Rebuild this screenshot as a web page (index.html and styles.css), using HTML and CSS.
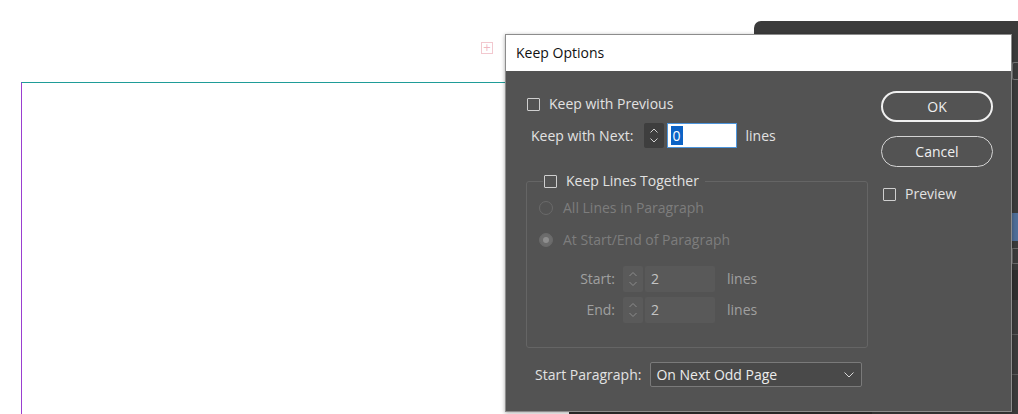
FILE: index.html
```html
<!doctype html>
<html lang="en">
<head>
    <meta charset="UTF-8">
    <title>Keep Options</title>
    <link rel="stylesheet" href="styles.css">
</head>
<body>
<div class="desk">
    <!-- document page behind the dialog -->
    <div class="page-frame"></div>
    <div class="bleed-mark">+</div>

    <!-- panel window peeking out behind -->
    <div class="panel-back">
        <div class="panel-strip">
            <span class="strip-item s1"></span>
            <span class="strip-item s2"></span>
            <span class="strip-item s3"></span>
            <span class="strip-item s4"></span>
            <span class="strip-item s5"></span>
            <span class="strip-item s6"></span>
        </div>
    </div>
    <div class="bottom-strip"></div>

    <div class="dialog">
        <div class="dialog-title">Keep Options</div>
        <div class="dialog-body">
            <div class="col-left">
                <label class="check-row">
                    <span class="checkbox"></span>
                    <span class="lbl">Keep with Previous</span>
                </label>
                <div class="field-row next-row">
                    <span class="lbl">Keep with Next:</span>
                    <span class="spinner">
                        <svg width="20" height="25" viewBox="0 0 20 25"><path d="M6.5 9.5 L10 6 L13.5 9.5" /><path d="M6.5 15.5 L10 19 L13.5 15.5" /></svg>
                    </span>
                    <span class="num-input active"><span class="sel">0</span></span>
                    <span class="unit">lines</span>
                </div>

                <fieldset class="group">
                    <legend class="group-legend">
                        <span class="checkbox"></span>
                        <span class="lbl">Keep Lines Together</span>
                    </legend>
                    <div class="radio-row">
                        <span class="radio"></span>
                        <span class="lbl dim">All Lines in Paragraph</span>
                    </div>
                    <div class="radio-row second">
                        <span class="radio on"></span>
                        <span class="lbl dim">At Start/End of Paragraph</span>
                    </div>
                    <div class="field-row sub-row">
                        <span class="sub-lbl">Start:</span>
                        <span class="spinner off">
                            <svg width="20" height="26" viewBox="0 0 20 26"><path d="M6.5 10 L10 6.5 L13.5 10" /><path d="M6.5 16 L10 19.5 L13.5 16" /></svg>
                        </span>
                        <span class="num-input off">2</span>
                        <span class="unit off">lines</span>
                    </div>
                    <div class="field-row sub-row end-row">
                        <span class="sub-lbl">End:</span>
                        <span class="spinner off">
                            <svg width="20" height="26" viewBox="0 0 20 26"><path d="M6.5 10 L10 6.5 L13.5 10" /><path d="M6.5 16 L10 19.5 L13.5 16" /></svg>
                        </span>
                        <span class="num-input off">2</span>
                        <span class="unit off">lines</span>
                    </div>
                </fieldset>

                <div class="field-row para-row">
                    <span class="lbl">Start Paragraph:</span>
                    <span class="select">
                        <span>On Next Odd Page</span>
                        <svg width="10" height="6" viewBox="0 0 10 6"><path d="M0.5 0.5 L5 5 L9.5 0.5" /></svg>
                    </span>
                </div>
            </div>

            <div class="col-right">
                <button class="btn btn-ok">OK</button>
                <button class="btn">Cancel</button>
                <label class="check-row preview-row">
                    <span class="checkbox"></span>
                    <span class="lbl">Preview</span>
                </label>
            </div>
        </div>
    </div>
</div>
</body>
</html>
```

FILE: styles.css
```css
/*reset*/
body, fieldset, legend, button {
    margin: 0;
    padding: 0;
}
body {
    background-color: #fff;
    font: 14px/20px "Open Sans", "Noto Sans", sans-serif;
}
/*/reset*/

.desk {
    position: relative;
    width: 1018px;
    height: 414px;
    overflow: hidden;
}

/* page + guides */
.page-frame {
    position: absolute;
    left: 21px;
    top: 82px;
    width: 1100px;
    height: 400px;
    border-top: 1px solid #1f9c98;
    border-left: 1px solid #9a3fd0;
}
.bleed-mark {
    position: absolute;
    left: 481px;
    top: 42px;
    width: 10px;
    height: 10px;
    border: 1px solid #f2c8cf;
    color: #f0b8c2;
    font: 10px/10px "DejaVu Sans", sans-serif;
    text-align: center;
}

/* dark panel behind */
.panel-back {
    position: absolute;
    left: 754px;
    top: 21px;
    width: 280px;
    height: 400px;
    background-color: #3b3b3b;
    border-radius: 7px 0 0 0;
}
.panel-strip {
    position: absolute;
    left: 258px;
    top: 13px;
    width: 8px;
    height: 380px;
}
.strip-item {
    position: absolute;
    left: 0;
    width: 8px;
}
.s1 { top: 28px; height: 16px; border: 1px solid #777; border-right: none; border-radius: 2px; width: 6px; }
.s2 { top: 179px; height: 28px; background-color: #4f6e98; }
.s3 { top: 214px; height: 14px; border: 1px solid #6a6a6a; border-right: none; width: 6px; }
.s4 { top: 236px; height: 30px; background-color: #2f2f2f; }
.s5 { top: 300px; height: 1px; background-color: #5a5a5a; }
.s6 { top: 340px; height: 1px; background-color: #5a5a5a; }

.bottom-strip {
    position: absolute;
    left: 569px;
    top: 412px;
    width: 303px;
    height: 2px;
    background-color: #2e2e2e;
}

/* dialog */
.dialog {
    position: absolute;
    left: 505px;
    top: 34px;
    width: 507px;
    height: 378px;
    box-sizing: border-box;
    border: 1px solid #8c8c8c;
    background-color: #535353;
    box-shadow: 0 1px 4px rgba(0,0,0,.35);
}
.dialog-title {
    height: 36px;
    line-height: 35px;
    padding-left: 10px;
    background-color: #fff;
    color: #111;
}
.dialog-body {
    display: flex;
    gap: 13px;
    padding: 20px 18px 0 20px;
    color: #e2e2e2;
}
.col-left {
    width: 342px;
    padding-top: 3px;
}
.col-right {
    width: 112px;
    display: flex;
    flex-direction: column;
}

/* checkboxes / radios */
.check-row {
    display: flex;
    align-items: center;
    height: 20px;
}
.checkbox {
    width: 11px;
    height: 11px;
    border: 1px solid #cfcfcf;
    border-radius: 1px;
    margin: 0 9px 0 1px;
}
.radio-row {
    display: flex;
    align-items: center;
    height: 20px;
    margin-top: 7px;
    padding-left: 12px;
}
.radio-row.second {
    margin-top: 12px;
}
.radio {
    width: 12px;
    height: 12px;
    border: 1px solid #6a6a6a;
    border-radius: 50%;
    margin-right: 10px;
    position: relative;
}
.radio.on {
    background-color: #6c6c6c;
}
.radio.on:after {
    content: "";
    position: absolute;
    left: 3px;
    top: 3px;
    width: 6px;
    height: 6px;
    border-radius: 50%;
    background-color: #8e8e8e;
}
.lbl.dim {
    color: #7d7d7d;
}

/* number fields */
.field-row {
    display: flex;
    align-items: center;
}
.next-row {
    margin-top: 9px;
    padding-left: 5px;
}
.next-row .lbl {
    margin-right: 10px;
}
.spinner {
    width: 20px;
    height: 25px;
    background-color: #3e3e3e;
    border-radius: 2px;
}
.spinner svg {
    display: block;
}
.spinner path {
    fill: none;
    stroke: #d0d0d0;
    stroke-width: 1;
}
.spinner.off {
    height: 26px;
    background-color: #5a5a5a;
}
.spinner.off path {
    stroke: #8c8c8c;
}
.num-input {
    box-sizing: border-box;
    width: 70px;
    height: 25px;
    margin-left: 3px;
    padding-left: 3px;
    line-height: 23px;
    background-color: #fff;
    border: 1px solid #4d95dc;
    color: #000;
}
.sel {
    display: inline-block;
    padding: 0 2px;
    line-height: 19px;
    background-color: #0c63c6;
    color: #fff;
}
.num-input.off {
    height: 26px;
    margin-left: 2px;
    padding-left: 6px;
    line-height: 26px;
    background-color: #595959;
    border: none;
    border-radius: 2px;
    color: #c4c4c4;
}
.unit {
    margin-left: 9px;
}
.unit.off {
    margin-left: 12px;
    color: #a0a0a0;
}

/* group */
.group {
    border: 1px solid #656565;
    border-radius: 3px;
    margin-top: 23px;
    padding: 0 0 24px 0;
}
.group-legend {
    display: flex;
    align-items: center;
    height: 20px;
    margin-left: 16px;
    padding: 0 6px 0 0;
}
.sub-row {
    margin-top: 16px;
}
.sub-row.end-row {
    margin-top: 5px;
}
.sub-lbl {
    width: 88px;
    text-align: right;
    margin-right: 8px;
    color: #a0a0a0;
}

/* start paragraph */
.para-row {
    margin-top: 14px;
    padding-left: 9px;
}
.para-row .lbl {
    margin-right: 9px;
}
.select {
    box-sizing: border-box;
    width: 212px;
    height: 25px;
    display: flex;
    align-items: center;
    justify-content: space-between;
    padding: 0 7px 0 5px;
    background-color: #494949;
    border: 1px solid #7a7a7a;
    border-radius: 2px;
    color: #ececec;
}
.select svg {
    display: block;
}
.select path {
    fill: none;
    stroke: #d8d8d8;
    stroke-width: 1;
}

/* buttons */
.btn {
    box-sizing: border-box;
    width: 112px;
    height: 31px;
    border: 1px solid #d4d4d4;
    border-radius: 16px;
    background: transparent;
    color: #efefef;
    font: 14px/20px "Open Sans", "Noto Sans", sans-serif;
    margin-bottom: 14px;
}
.btn-ok {
    border: 2px solid #f0f0f0;
}
.preview-row {
    margin-top: 3px;
    padding-left: 1px;
}
```
